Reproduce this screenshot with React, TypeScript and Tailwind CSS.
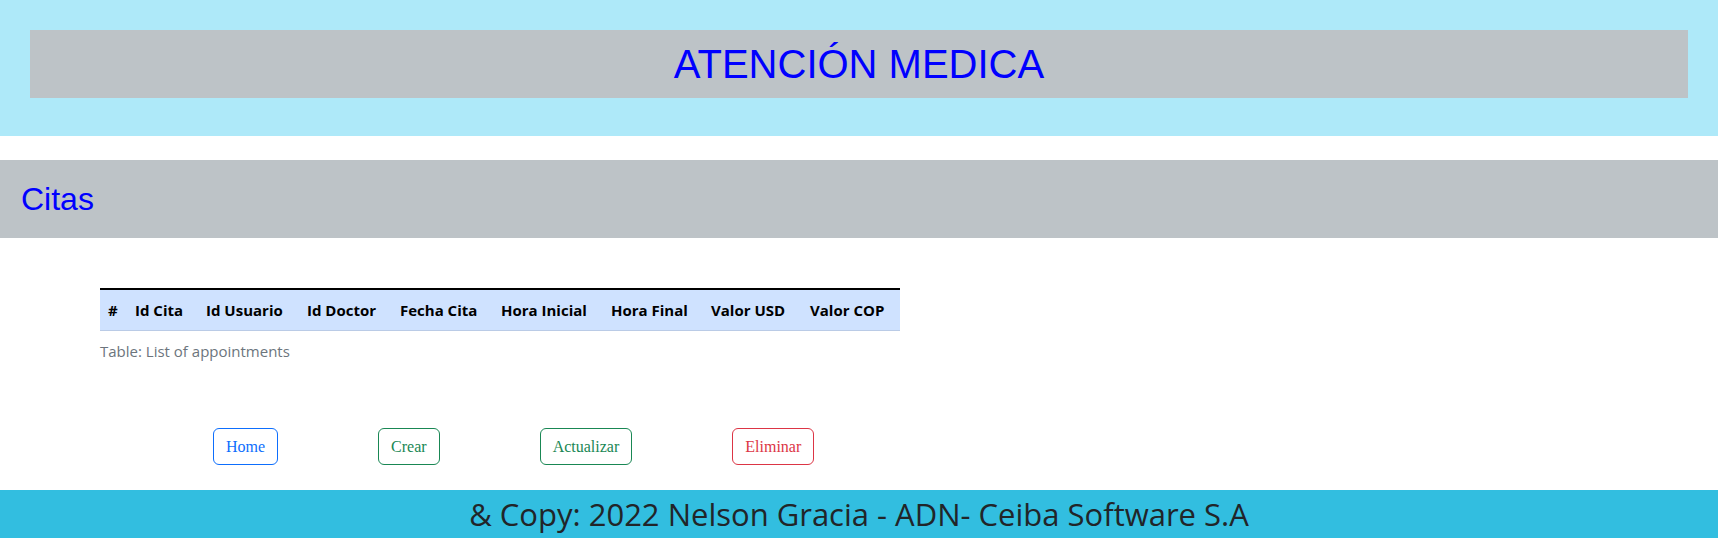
import React from 'react';

const columns = [
  { label: '#', w: 'w-[27px]' },
  { label: 'Id Cita', w: 'w-[71px]' },
  { label: 'Id Usuario', w: 'w-[101px]' },
  { label: 'Id Doctor', w: 'w-[93px]' },
  { label: 'Fecha Cita', w: 'w-[101px]' },
  { label: 'Hora Inicial', w: 'w-[110px]' },
  { label: 'Hora Final', w: 'w-[100px]' },
  { label: 'Valor USD', w: 'w-[99px]' },
  { label: 'Valor COP', w: 'w-[98px]' },
];

const buttons = [
  { label: 'Home', cls: 'border-[#0d6efd] text-[#0d6efd]' },
  { label: 'Crear', cls: 'border-[#198754] text-[#198754]' },
  { label: 'Actualizar', cls: 'border-[#198754] text-[#198754]' },
  { label: 'Eliminar', cls: 'border-[#dc3545] text-[#dc3545]' },
];

export default function App() {
  return (
    <div className="w-[1718px] h-[538px] bg-white flex flex-col overflow-hidden font-['Open_Sans','Noto_Sans',sans-serif]">
      {/* Header */}
      <header className="h-[136px] bg-[#aee9f9] pt-[30px] px-[30px]">
        <div className="h-[68px] bg-[#bdc3c7] flex items-center justify-center">
          <h1 className="text-[40px] leading-none text-[#0000ff] font-['Liberation_Sans',Arial,sans-serif]">
            ATENCIÓN MEDICA
          </h1>
        </div>
      </header>

      {/* Section title */}
      <div className="mt-[24px] h-[78px] bg-[#bdc3c7] flex items-center pl-[21px]">
        <h2 className="text-[32px] leading-none text-[#0000ff] font-['Liberation_Sans',Arial,sans-serif]">Citas</h2>
      </div>

      {/* Table */}
      <div className="mt-[50px] pl-[100px]">
        <table className="table-fixed border-collapse text-[#000]">
          <caption className="caption-bottom text-left text-[15px] leading-6 text-[#6c757d] py-2">
            Table: List of appointments
          </caption>
          <thead className="border-t-2 border-black">
            <tr className="bg-[#cfe2ff] border-b border-[#bacbe6]">
              {columns.map(c => (
                <th key={c.label} className={`${c.w} px-2 py-2 text-left text-[15px] leading-6 font-bold whitespace-nowrap`}>
                  {c.label}
                </th>
              ))}
            </tr>
          </thead>
          <tbody />
        </table>
      </div>

      {/* Actions */}
      <div className="mt-[57px] pl-[213px] flex gap-[100px]">
        {buttons.map(b => (
          <button
            key={b.label}
            className={`border rounded-md px-3 py-[5.5px] bg-white text-base leading-6 font-['Liberation_Serif','Times_New_Roman',serif] ${b.cls}`}
          >
            {b.label}
          </button>
        ))}
      </div>

      {/* Footer */}
      <footer className="mt-auto h-[48px] bg-[#32bee0] flex items-center justify-center">
        <p className="text-[31px] leading-none text-[#212529]">& Copy: 2022 Nelson Gracia - ADN- Ceiba Software S.A</p>
      </footer>
    </div>
  );
}
